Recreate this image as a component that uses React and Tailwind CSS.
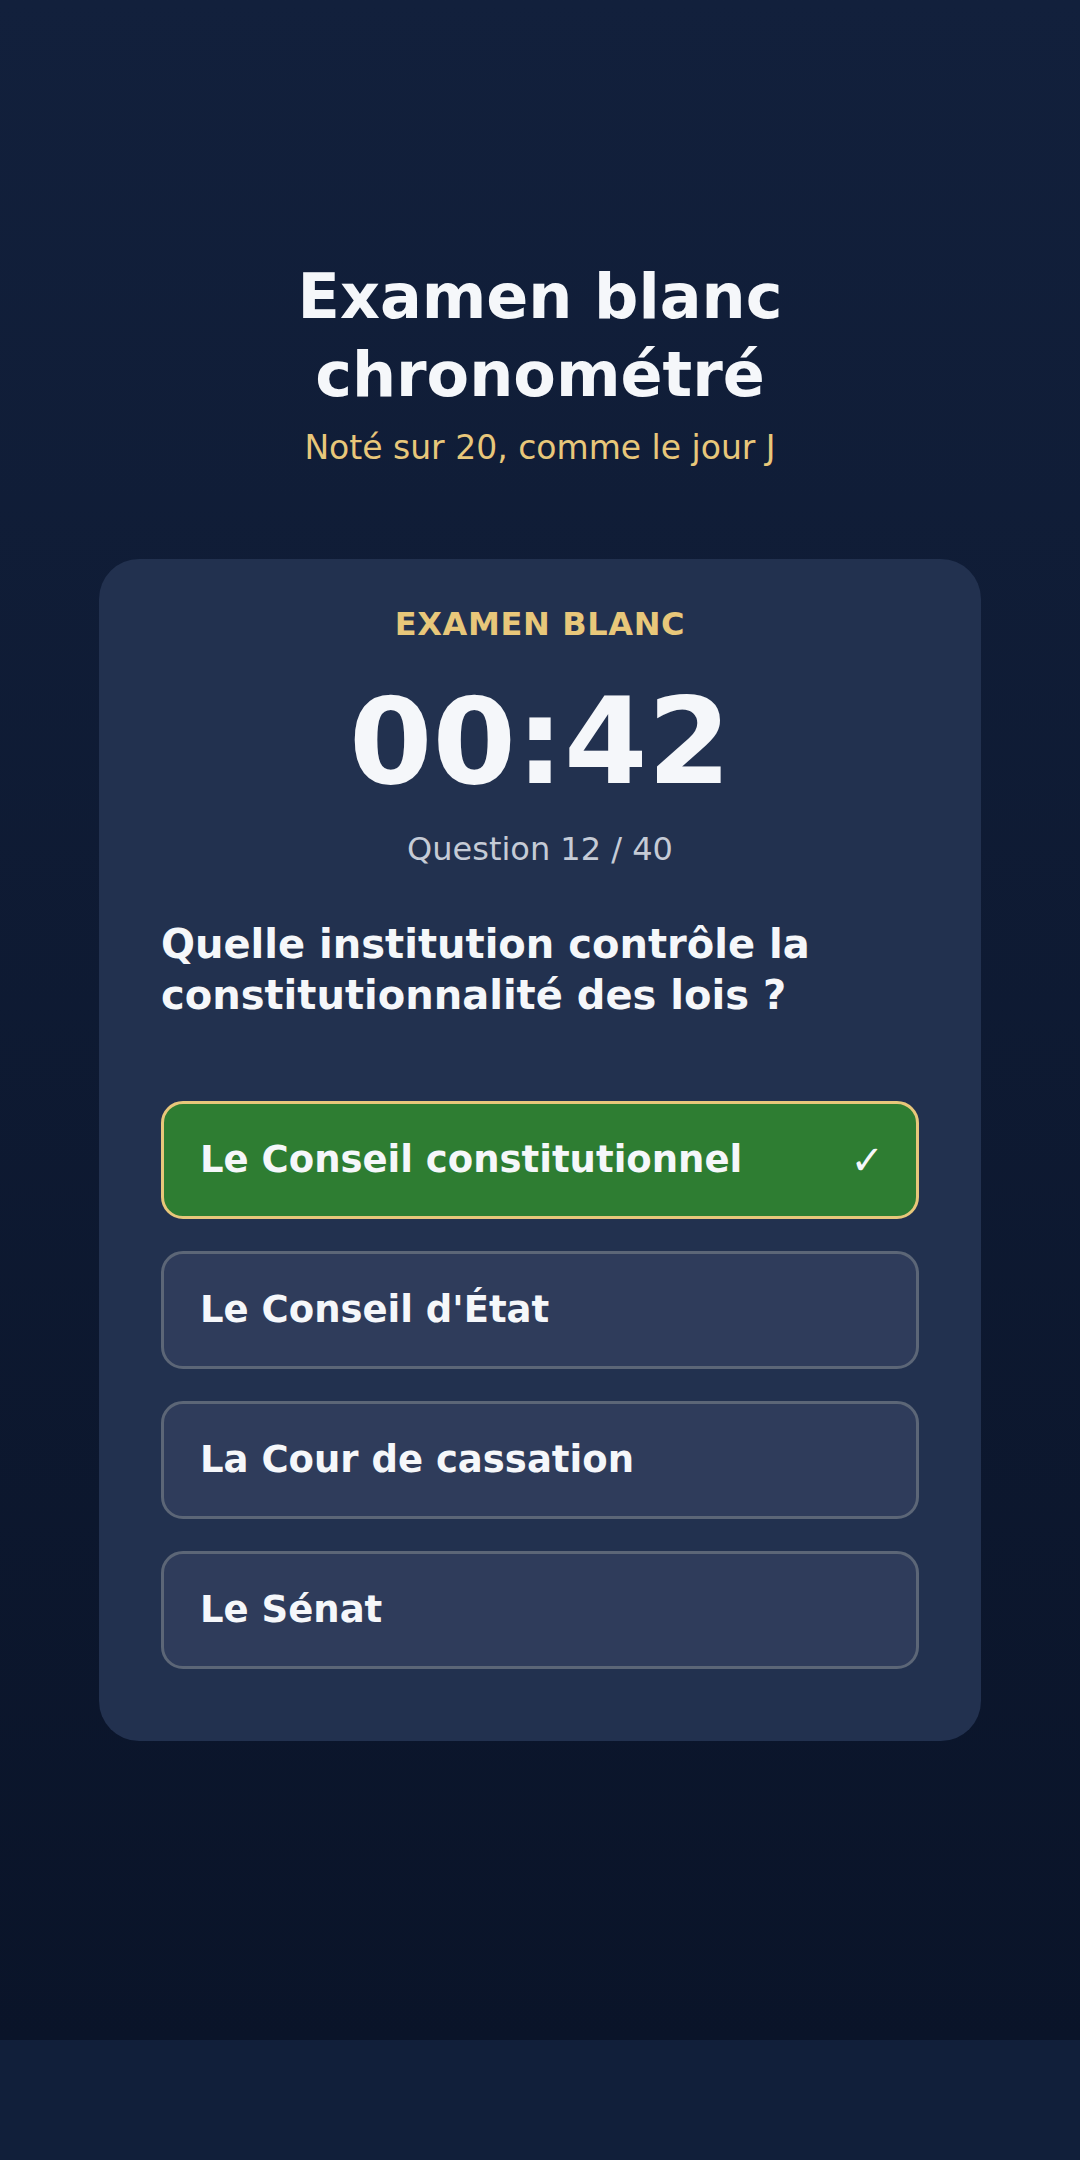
export default function App() {
  const options = [
    { label: "Le Conseil constitutionnel", correct: true },
    { label: "Le Conseil d'État" },
    { label: "La Cour de cassation" },
    { label: "Le Sénat" },
  ];
  return (
    <div className="bg-[#111f3a] min-h-[2160px] font-['DejaVu_Sans',sans-serif]">
      <div className="min-h-[2040px] bg-gradient-to-b from-[#12203c] to-[#0a1429] flex flex-col items-center pt-[258px]">
        <h1 className="text-[62px] leading-[78px] font-bold text-[#f5f7fa] text-center">
          Examen blanc
          <br />
          chronométré
        </h1>
        <p className="mt-[14px] text-[33px] leading-[40px] text-[#e8c77a] text-center">
          Noté sur 20, comme le jour J
        </p>
        <div className="mt-[91px] w-[882px] rounded-[40px] bg-[#22314f] px-[62px] pt-[45px] pb-[72px] flex flex-col">
          <div className="text-center text-[32px] leading-[40px] font-bold text-[#e8c77a] tracking-[0.02em]">
            EXAMEN BLANC
          </div>
          <div className="mt-[38px] text-center text-[120px] leading-[120px] font-bold text-[#f5f7fa]">
            00:42
          </div>
          <div className="mt-[27px] text-center text-[32px] leading-[40px] text-[#c5cbd6]">
            Question 12 / 40
          </div>
          <div className="mt-[50px] text-[40px] leading-[51px] font-bold text-[#f5f7fa]">
            Quelle institution contrôle la
            <br />
            constitutionnalité des lois ?
          </div>
          <div className="mt-[80px] flex flex-col gap-[32px]">
            {options.map((o) => (
              <div
                key={o.label}
                className={
                  o.correct
                    ? "h-[118px] rounded-[22px] border-[3px] border-[#e8c77a] bg-[#2e7d32] flex items-center justify-between pl-[36px] pr-[32px]"
                    : "h-[118px] rounded-[22px] border-[3px] border-[#5c6677] bg-[#2f3c5b] flex items-center justify-between pl-[36px] pr-[32px]"
                }
              >
                <span className="text-[37px] font-bold text-[#f5f7fa]">{o.label}</span>
                {o.correct && (
                  <span className="text-[40px] text-[#f5f7fa]">✓</span>
                )}
              </div>
            ))}
          </div>
        </div>
      </div>
    </div>
  );
}
